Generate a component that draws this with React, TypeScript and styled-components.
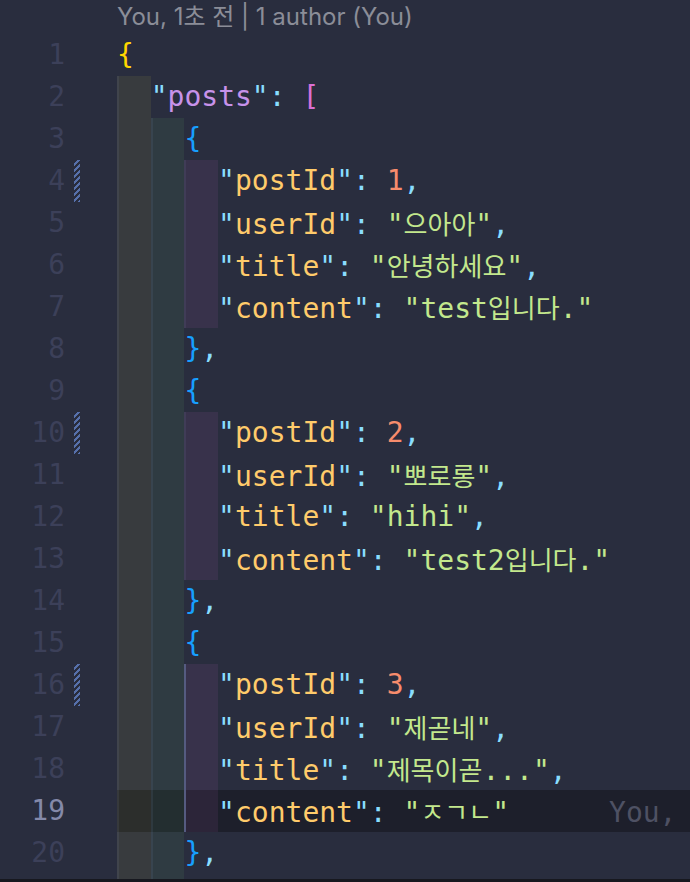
import React from 'react';
import styled, { createGlobalStyle } from 'styled-components';

const Global = createGlobalStyle`
  html, body { margin: 0; padding: 0; background: #292d3e; }
  body { width: 690px; height: 882px; overflow: hidden; }
`;

const MONO = `"DejaVu Sans Mono", "Noto Sans CJK KR", monospace`;

const Page = styled.div`
  display: flex;
  flex-direction: column;
  width: 690px;
  height: 882px;
  background: #292d3e;
`;

const Editor = styled.div`
  height: 879px;
  overflow: hidden;
  font-family: ${MONO};
  font-size: 28px;
`;

const BottomBar = styled.div`
  height: 3px;
  background: #17181f;
`;

const CodeLens = styled.div`
  height: 34px;
  line-height: 34px;
  padding-left: 117px;
  font-family: Inter, "Noto Sans CJK KR", sans-serif;
  font-size: 24px;
  color: #8b8d98;
  white-space: nowrap;
`;

const Row = styled.div`
  display: flex;
  height: 42px;
  line-height: 42px;
  white-space: pre;
`;

const Gutter = styled.div`
  width: 117px;
  flex: none;
  display: flex;
`;

const LineNo = styled.span<{ $active?: boolean }>`
  width: 65px;
  text-align: right;
  color: ${(p) => (p.$active ? '#8489a9' : '#3c4059')};
`;

const Dirty = styled.span<{ $show?: boolean }>`
  margin-left: 9px;
  width: 6px;
  background: ${(p) =>
    p.$show
      ? 'repeating-linear-gradient(-45deg, #5670ab 0 2.1px, transparent 2.1px 4.2px)'
      : 'none'};
`;

const Content = styled.div<{ $current?: boolean }>`
  flex: 1;
  min-width: 0;
  display: flex;
  overflow: hidden;
  background: ${(p) => (p.$current ? '#1d1f2b' : 'transparent')};
`;

const BAND_COLORS = [
  'rgba(255,255,64,0.07)',
  'rgba(127,255,127,0.07)',
  'rgba(255,127,255,0.07)',
  'rgba(79,236,236,0.07)',
];

const Band = styled.span<{ $level: number; $active?: boolean }>`
  width: 2ch;
  flex: none;
  background: ${(p) => BAND_COLORS[p.$level]};
  box-shadow: inset ${(p) => (p.$active ? '2px 0 0 #555b80' : '2px 0 0 rgba(120,128,170,0.13)')};
`;

const Code = styled.span`
  flex: none;
`;

const COLORS: Record<string, string> = {
  p: '#89ddff',
  y: '#ffd700',
  o: '#da70d6',
  b: '#179fff',
  k1: '#c792ea',
  k: '#ffcb6b',
  s: '#c3e88d',
  n: '#f78c6c',
};

const Tok = styled.span<{ $c: string }>`
  color: ${(p) => COLORS[p.$c]};
`;

const Hangul = styled.span`
  font-family: "Noto Sans CJK KR", sans-serif;
  font-size: 26px;
`;

const Ghost = styled.span`
  margin-left: 100px;
  color: #4e5163;
`;

type T = [string, string];

const HANGUL_RE = /([\u3131-\u318e\uac00-\ud7a3]+)/;

function renderText(text: string) {
  return text.split(HANGUL_RE).map((part, i) =>
    HANGUL_RE.test(part) ? <Hangul key={i}>{part}</Hangul> : part
  );
}

const kv = (key: string, value: T[], comma: boolean): T[] => [
  ['"', 'p'],
  [key, 'k'],
  ['"', 'p'],
  [':', 'p'],
  [' ', 'p'],
  ...value,
  ...(comma ? ([[',', 'p']] as T[]) : []),
];
const str = (v: string): T[] => [['"' + v + '"', 's']];
const num = (v: string): T[] => [[v, 'n']];

interface Line {
  bands: number;
  tokens: T[];
  dirty?: boolean;
  ghost?: string;
  hideNumber?: boolean;
}

const post = (id: string, user: string, title: string, content: string, last: boolean): Line[] => [
  { bands: 2, tokens: [['{', 'b']] },
  { bands: 3, tokens: kv('postId', num(id), true), dirty: true },
  { bands: 3, tokens: kv('userId', str(user), true) },
  { bands: 3, tokens: kv('title', str(title), true) },
  {
    bands: 3,
    tokens: kv('content', str(content), false),
    ghost: last ? 'You,' : undefined,
  },
  { bands: 2, tokens: [['}', 'b'], [',', 'p']] },
];

const LINES: Line[] = [
  { bands: 0, tokens: [['{', 'y']] },
  {
    bands: 1,
    tokens: [
      ['"', 'p'],
      ['posts', 'k1'],
      ['"', 'p'],
      [':', 'p'],
      [' ', 'p'],
      ['[', 'o'],
    ],
  },
  ...post('1', '으아아', '안녕하세요', 'test입니다.', false),
  ...post('2', '뽀로롱', 'hihi', 'test2입니다.', false),
  ...post('3', '제곧네', '제목이곧...', 'ㅈㄱㄴ', true),
  { bands: 2, tokens: [], hideNumber: true },
];

const CURRENT = 19;
const ACTIVE_FROM = 16;
const ACTIVE_TO = 19;

export default function App() {
  return (
    <Page>
      <Global />
      <Editor>
        <CodeLens>You, 1초 전 | 1 author (You)</CodeLens>
        {LINES.map((line, i) => {
          const n = i + 1;
          const current = n === CURRENT;
          return (
            <Row key={n}>
              <Gutter>
                <LineNo $active={current}>{line.hideNumber ? '' : n}</LineNo>
                <Dirty $show={line.dirty} />
              </Gutter>
              <Content $current={current}>
                {Array.from({ length: line.bands }).map((_, b) => (
                  <Band
                    key={b}
                    $level={b}
                    $active={b === 2 && n >= ACTIVE_FROM && n <= ACTIVE_TO}
                  />
                ))}
                <Code>
                  {line.tokens.map(([t, c], j) => (
                    <Tok key={j} $c={c}>
                      {renderText(t)}
                    </Tok>
                  ))}
                  {line.ghost && <Ghost>{line.ghost}</Ghost>}
                </Code>
              </Content>
            </Row>
          );
        })}
      </Editor>
      <BottomBar />
    </Page>
  );
}
